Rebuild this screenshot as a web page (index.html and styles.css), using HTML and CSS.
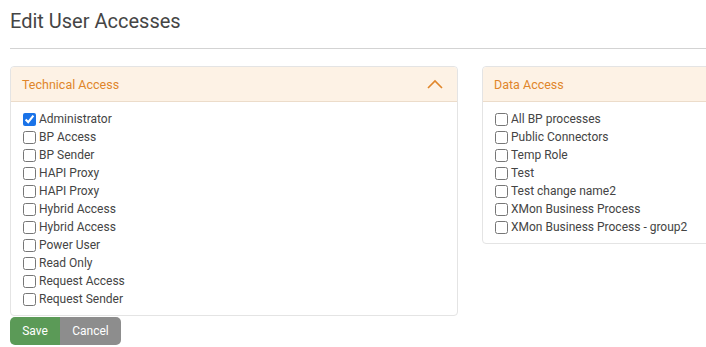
FILE: index.html
```html
<!DOCTYPE html>
<html lang="en">
<head>
  <meta charset="UTF-8">
  <title>Edit User Accesses</title>
  <link rel="stylesheet" href="styles.css">
</head>
<body>

  <div class="page">
    <h1 class="title">Edit User Accesses</h1>
    <hr class="divider">

    <div class="panels">
      <div class="panel">
        <div class="panel-head">
          <span>Technical Access</span>
          <svg class="chevron" width="16" height="10" viewBox="0 0 16 10">
            <polyline points="1,9 8,2 15,9" fill="none" stroke="#e0862a" stroke-width="1.6"/>
          </svg>
        </div>
        <div class="panel-body">
          <label class="check"><input type="checkbox" checked> Administrator</label>
          <label class="check"><input type="checkbox"> BP Access</label>
          <label class="check"><input type="checkbox"> BP Sender</label>
          <label class="check"><input type="checkbox"> HAPI Proxy</label>
          <label class="check"><input type="checkbox"> HAPI Proxy</label>
          <label class="check"><input type="checkbox"> Hybrid Access</label>
          <label class="check"><input type="checkbox"> Hybrid Access</label>
          <label class="check"><input type="checkbox"> Power User</label>
          <label class="check"><input type="checkbox"> Read Only</label>
          <label class="check"><input type="checkbox"> Request Access</label>
          <label class="check"><input type="checkbox"> Request Sender</label>
        </div>
      </div>

      <div class="panel">
        <div class="panel-head">
          <span>Data Access</span>
        </div>
        <div class="panel-body">
          <label class="check"><input type="checkbox"> All BP processes</label>
          <label class="check"><input type="checkbox"> Public Connectors</label>
          <label class="check"><input type="checkbox"> Temp Role</label>
          <label class="check"><input type="checkbox"> Test</label>
          <label class="check"><input type="checkbox"> Test change name2</label>
          <label class="check"><input type="checkbox"> XMon Business Process</label>
          <label class="check"><input type="checkbox"> XMon Business Process - group2</label>
        </div>
      </div>
    </div>

    <div class="actions">
      <button class="btn btn-save">Save</button>
      <button class="btn btn-cancel">Cancel</button>
    </div>
  </div>

</body>
</html>
```

FILE: styles.css
```css
html, body { margin: 0; padding: 0; background: #fff; overflow: hidden; }
body { font-family: Roboto, "Liberation Sans", Arial, sans-serif; color: #444; }
.page { width: 920px; padding: 0 0 0 10px; }
.title { margin: 0; padding-top: 9px; font-size: 20px; font-weight: 400; line-height: 24px; color: #454545; }
.divider { margin: 15px 0 17px; border: none; border-top: 1px solid #d3d3d3; }
.panels { display: grid; grid-template-columns: 448px 448px; gap: 24px; align-items: start; }
.panel { border: 1px solid #e4e4e4; border-radius: 4px; background: #fff; }
.panel-head { height: 34px; display: flex; align-items: center; justify-content: space-between; padding: 0 14px 0 11px; background: #fdf2e5; border-bottom: 1px solid #ecdcca; border-radius: 4px 4px 0 0; color: #e0862a; font-size: 12.5px; }
.chevron { display: block; margin-top: -1px; }
.panel-body { padding: 8px 11px 7px; }
.check { display: flex; align-items: center; height: 18px; font-size: 12px; color: #444; }
.check input { width: 13px; height: 13px; margin: 0 3px 0 1px; accent-color: #1a73e8; }
.actions { display: flex; margin-top: 1px; }
.btn { border: none; height: 28px; padding: 0 12px; font-family: inherit; font-size: 12px; color: #fff; cursor: pointer; }
.btn-save { background: #5b9a57; border-radius: 5px 0 0 5px; width: 50px; }
.btn-cancel { background: #8d8d8d; border-radius: 0 5px 5px 0; width: 61px; }
```
